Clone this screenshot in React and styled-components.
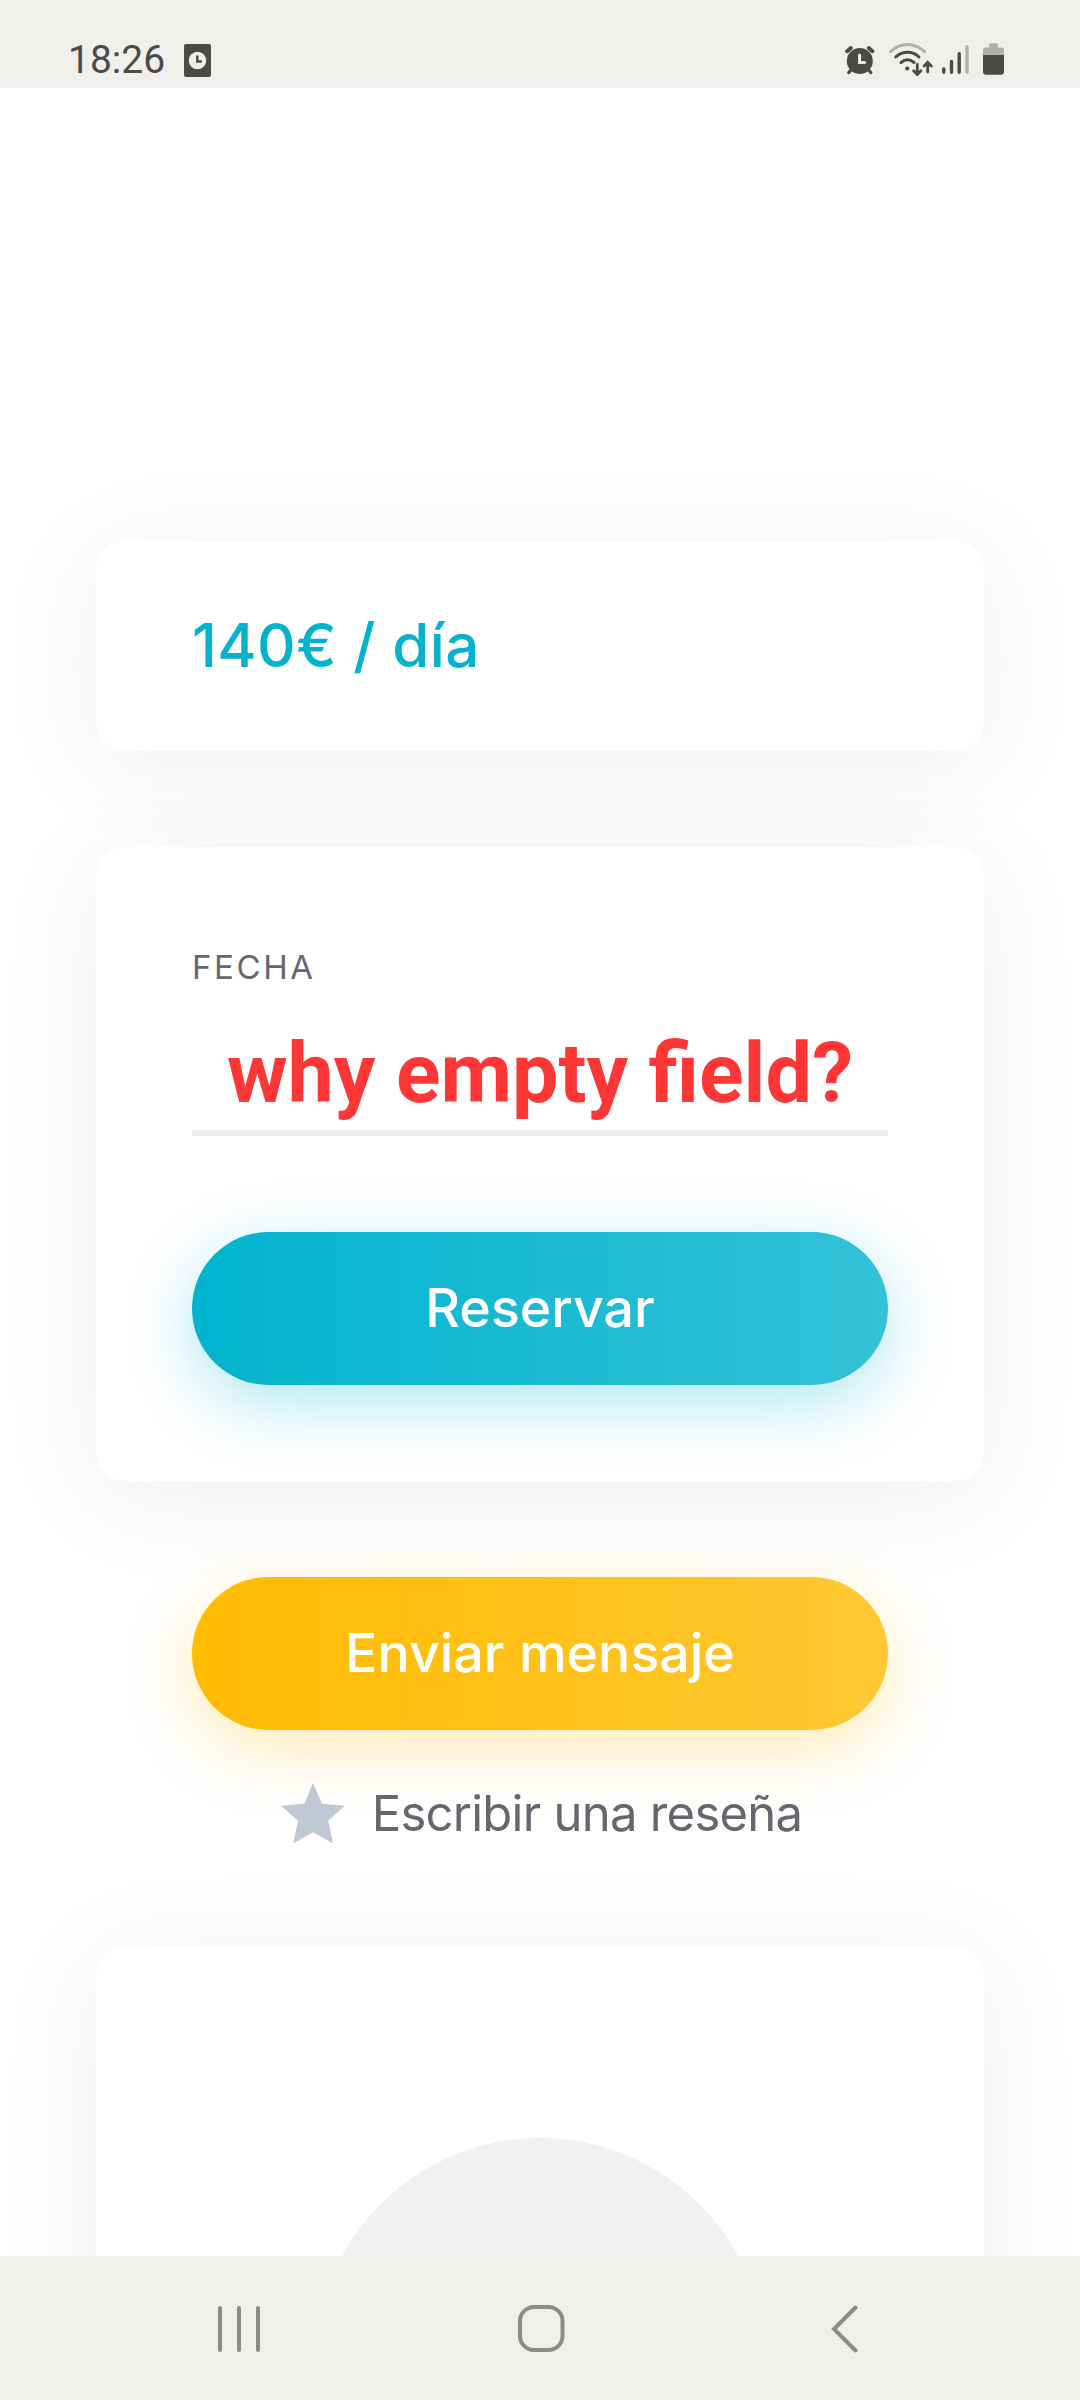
import React from 'react';
import styled, { createGlobalStyle } from 'styled-components';

const GlobalStyle = createGlobalStyle`
  * {
    box-sizing: border-box;
  }
  body {
    margin: 0;
    background-color: #ffffff;
  }
`;

const Screen = styled.div`
  width: 1080px;
  height: 2400px;
  display: flex;
  flex-direction: column;
  overflow: hidden;
  font-family: Inter, sans-serif;
  color: #65676f;
`;

const StatusBar = styled.header`
  flex: none;
  height: 88px;
  padding: 32px 76px 0 68px;
  display: flex;
  align-items: flex-start;
  justify-content: space-between;
  background-color: #f0efeb;
  color: #4a4a46;
`;

const StatusLeft = styled.div`
  display: flex;
  align-items: flex-start;
  svg {
    margin: 12px 0 0 18px;
  }
`;

const Clock = styled.span`
  width: 98px;
  font-family: Roboto, sans-serif;
  font-size: 39px;
  line-height: 57px;
  white-space: nowrap;
`;

const StatusRight = styled.div`
  display: flex;
  align-items: flex-start;
  padding-top: 10px;
  svg + svg {
    margin-left: 9px;
  }
  svg:nth-child(2),
  svg:last-child {
    margin-left: 14px;
  }
`;

const Content = styled.main`
  flex: 1;
  min-height: 0;
  padding: 453px 96px 0;
  overflow: hidden;
`;

const Card = styled.section`
  border-radius: 30px;
  background-color: #ffffff;
  box-shadow: 0 15px 105px rgba(28, 50, 90, 0.075);
`;

const PriceCard = styled(Card)`
  height: 210px;
  margin-bottom: 96px;
  padding: 0 96px 2px;
  display: flex;
  align-items: center;
`;

const Price = styled.h2`
  margin: 0;
  font-size: 60px;
  font-weight: 500;
  letter-spacing: 0.4px;
  color: #03b3ce;
`;

const BookingCard = styled(Card)`
  padding: 96px;
  margin-bottom: 96px;
`;

const Label = styled.label`
  display: block;
  font-size: 33px;
  line-height: 48px;
  letter-spacing: 2.6px;
`;

const Field = styled.div`
  height: 145px;
  margin-bottom: 96px;
  padding-bottom: 8px;
  border-bottom: 6px solid #ededf2;
  display: flex;
  align-items: flex-end;
  justify-content: center;
`;

const Note = styled.span`
  font-family: Roboto, sans-serif;
  font-size: 82.6px;
  font-weight: 700;
  line-height: 96px;
  white-space: nowrap;
  color: #ff3636;
`;

const Button = styled.button`
  display: block;
  width: 696px;
  height: 153px;
  margin: 0 auto;
  padding: 0 0 2px;
  border: 0;
  border-radius: 77px;
  font-family: inherit;
  font-size: 53.7px;
  font-weight: 500;
  color: #ffffff;
  background: ${({ $from, $to }) => `linear-gradient(to right, ${$from}, ${$to})`};
  box-shadow: 0 18px 66px ${({ $glow }) => $glow};
`;

const ReviewLink = styled.a`
  height: 166px;
  margin-bottom: 50px;
  display: flex;
  align-items: center;
  justify-content: center;
  gap: 27px;
  padding-left: 3px;
  font-size: 49px;
  letter-spacing: -0.75px;
`;

const ProfileCard = styled(Card)`
  height: 720px;
  padding-top: 192px;
`;

const Avatar = styled.div`
  width: 450px;
  height: 450px;
  margin: 0 auto;
  border-radius: 50%;
  background-color: #f1f1f1;
`;

const NavBar = styled.nav`
  flex: none;
  height: 144px;
  padding: 0 222px 0 218px;
  display: flex;
  align-items: center;
  justify-content: space-between;
  background-color: #f0efeb;
  svg {
    display: block;
    fill: none;
    stroke: #8c8b88;
    stroke-width: 4;
    stroke-linecap: round;
  }
  svg:nth-child(2) {
    margin-right: 10px;
  }
`;

const ClockCardIcon = () => (
  <svg width="27" height="33" viewBox="0 0 27 33">
    <rect width="27" height="33" rx="2" fill="#4a4a46" />
    <circle cx="13.5" cy="16.5" r="8.7" fill="#f0efeb" />
    <path d="M13.3 11.5v6h4.5" fill="none" stroke="#4a4a46" strokeWidth="2.4" />
  </svg>
);

const AlarmIcon = () => (
  <svg width="30" height="34" viewBox="0 0 30 34">
    <circle cx="14.8" cy="19" r="13" fill="#4a4a46" />
    <path d="M2.2 9.2l3.6-3.2M27.4 9.2l-3.6-3.2" stroke="#4a4a46" strokeWidth="4" strokeLinecap="round" />
    <path d="M6 28l-2.2 2.5M23.6 28l2.2 2.5" stroke="#4a4a46" strokeWidth="3.4" strokeLinecap="round" />
    <path d="M14.6 13v7.5h5" fill="none" stroke="#f0efeb" strokeWidth="3" strokeLinecap="round" />
  </svg>
);

const WifiIcon = () => (
  <svg width="44" height="34" viewBox="0 0 44 34" fill="none" stroke="#4a4a46" strokeWidth="3" strokeLinecap="round">
    <path d="M1.5 9.7Q9 2.6 18.5 2.6T35.5 9.7" stroke="#b1b0ad" />
    <path d="M6.7 15Q12 10.3 18.5 10.3T30 15" />
    <path d="M12 20.5q6.5-5.4 13 0" />
    <circle cx="18.2" cy="26.5" r="2.1" fill="#4a4a46" stroke="none" />
    <path d="M28.3 22.5v9.5M24.7 28.8l3.6 3.7 3.6-3.7M38.7 30v-9.5M35.1 24l3.6-3.7 3.6 3.7" strokeWidth="2.8" />
  </svg>
);

const SignalIcon = () => (
  <svg width="27" height="34" viewBox="0 0 27 34" strokeWidth="3.4" strokeLinecap="round">
    <path d="M1.8 27v3.2M9.5 19.5v10.7M17.2 11.7v18.5" stroke="#4a4a46" />
    <path d="M25 4.7v25.5" stroke="#b1b0ad" />
  </svg>
);

const BatteryIcon = () => (
  <svg width="21" height="34" viewBox="0 0 21 34">
    <path d="M0 13V8q0-2.6 2.6-2.6H6V3q0-1.8 1.8-1.8h5.4Q15 1.2 15 3v2.4h3.4Q21 5.4 21 8v5z" fill="#b1b0ad" />
    <path d="M0 13h21v16.5q0 3.2-3.2 3.2H3.2Q0 32.7 0 29.5z" fill="#4a4a46" />
  </svg>
);

const StarIcon = () => (
  <svg width="64" height="61" viewBox="0 0 64 61">
    <path d="M32 0L41 20.7L64 22.7L47.2 37.7L52 60.5L32 49.3L12.2 60.5L17 37.7L0 22.7L23.2 20.7Z" fill="#c0c7d5" />
  </svg>
);

function App() {
  return (
    <Screen>
      <GlobalStyle />
      <StatusBar>
        <StatusLeft>
          <Clock>18:26</Clock>
          <ClockCardIcon />
        </StatusLeft>
        <StatusRight>
          <AlarmIcon />
          <WifiIcon />
          <SignalIcon />
          <BatteryIcon />
        </StatusRight>
      </StatusBar>
      <Content>
        <PriceCard>
          <Price>140€ / día</Price>
        </PriceCard>
        <BookingCard>
          <Label>FECHA</Label>
          <Field>
            <Note>why empty field?</Note>
          </Field>
          <Button $from="#00b3ce" $to="#33c2d7" $glow="rgba(0, 179, 206, 0.32)">Reservar</Button>
        </BookingCard>
        <Button $from="#ffbb00" $to="#ffc833" $glow="rgba(255, 187, 0, 0.3)">Enviar mensaje</Button>
        <ReviewLink>
          <StarIcon />
          <span>Escribir una reseña</span>
        </ReviewLink>
        <ProfileCard>
          <Avatar />
        </ProfileCard>
      </Content>
      <NavBar>
        <svg width="42" height="50" viewBox="0 0 42 50">
          <path d="M2 5v42M21 5v42M40 5v42" />
        </svg>
        <svg width="48" height="50" viewBox="0 0 48 50">
          <rect x="3" y="4" width="42.5" height="43" rx="14" />
        </svg>
        <svg width="27" height="50" viewBox="0 0 27 50">
          <path d="M24.5 4.5L3 26L24.5 47.5" />
        </svg>
      </NavBar>
    </Screen>
  );
}

export default App;
